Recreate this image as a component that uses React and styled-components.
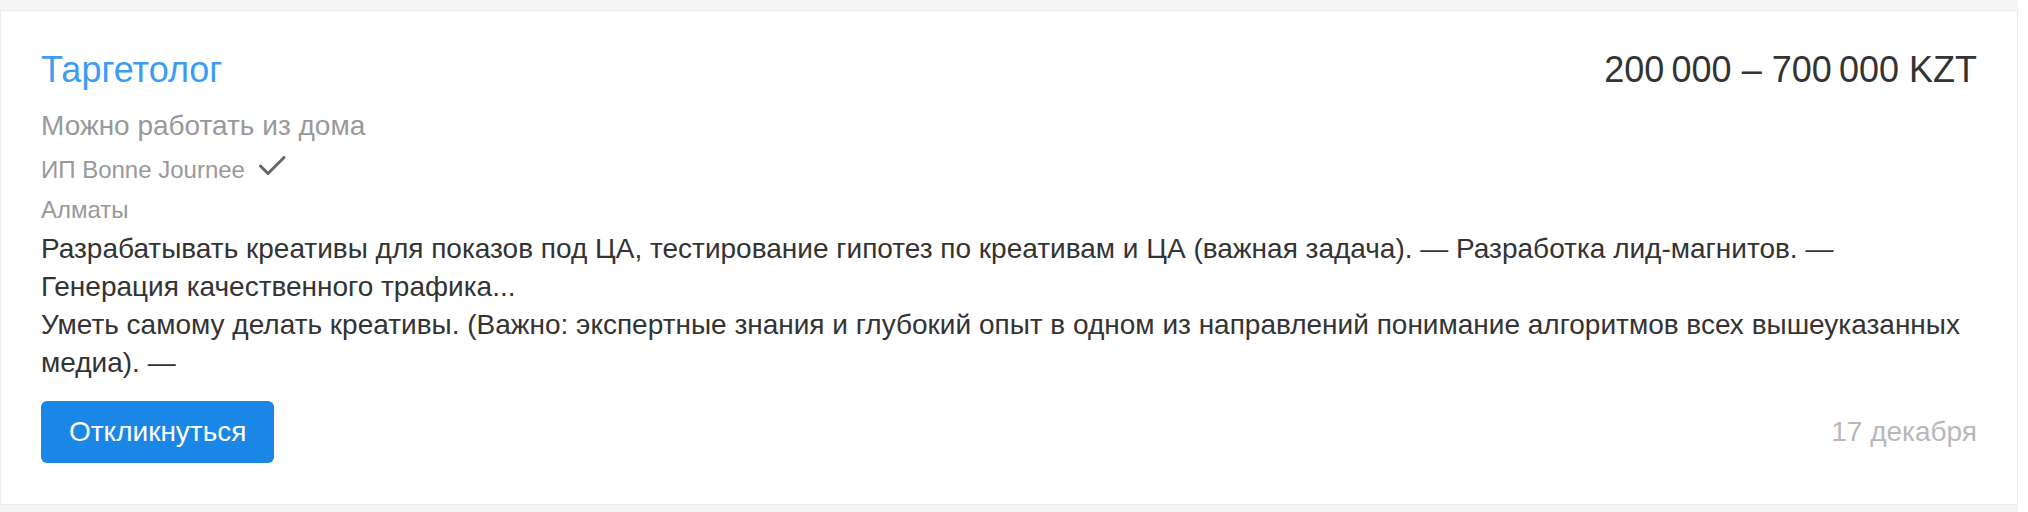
import React from "react";
import styled, { createGlobalStyle } from "styled-components";

const GlobalStyle = createGlobalStyle`
  html, body {
    margin: 0;
    padding: 0;
    background: #ffffff;
  }
  body {
    font-family: "Liberation Sans", Arial, Helvetica, sans-serif;
    -webkit-font-smoothing: antialiased;
  }
`;

const List = styled.div`
  width: 2018px;
  box-sizing: border-box;
  background: #f5f5f5;
  padding: 10px 0 10px;
  display: flex;
  flex-direction: column;
  gap: 10px;
`;

const Card = styled.article`
  background: #ffffff;
  border: 1px solid #ebebeb;
  padding: 36px 40px 41px;
  display: flex;
  flex-direction: column;
`;

const HeaderRow = styled.div`
  display: flex;
  justify-content: space-between;
  align-items: baseline;
`;

const Title = styled.a`
  font-size: 36px;
  line-height: 46px;
  color: #3b9cf4;
  text-decoration: none;
  cursor: pointer;
`;

const Salary = styled.div`
  font-size: 36px;
  line-height: 46px;
  color: #333333;
  white-space: nowrap;
`;

const Subtitle = styled.div`
  margin-top: 13px;
  font-size: 28px;
  line-height: 40px;
  color: #999999;
`;

const MetaList = styled.div`
  margin-top: 4px;
  display: flex;
  flex-direction: column;
`;

const MetaRow = styled.div`
  display: flex;
  align-items: center;
  gap: 13px;
  font-size: 24px;
  line-height: 40px;
  color: #999999;
`;

const CheckIcon = styled.svg`
  width: 28px;
  height: 20px;
  flex: none;
  margin-top: -8px;
`;

const Snippet = styled.div`
  display: flex;
  flex-direction: column;
`;

const SnippetText = styled.p`
  margin: 0;
  font-size: 28px;
  line-height: 38px;
  color: #333333;
`;

const Footer = styled.div`
  margin-top: 19px;
  display: flex;
  justify-content: space-between;
  align-items: center;
`;

const RespondButton = styled.button`
  height: 62px;
  padding: 0 28px;
  border: none;
  border-radius: 6px;
  background: #1a87e6;
  color: #ffffff;
  font-family: "Liberation Sans", Arial, Helvetica, sans-serif;
  font-size: 28px;
  line-height: 62px;
  cursor: pointer;
`;

const DateText = styled.span`
  font-size: 28px;
  line-height: 40px;
  color: #b8b8b8;
`;

function Check() {
  return (
    <CheckIcon viewBox="0 0 28 20" fill="none">
      <path
        d="M2.5 10 L10 17.5 L26 1.5"
        stroke="#666666"
        strokeWidth="3"
        strokeLinecap="round"
        strokeLinejoin="round"
      />
    </CheckIcon>
  );
}

export default function App() {
  return (
    <>
      <GlobalStyle />
      <List>
        <Card>
          <HeaderRow>
            <Title>Таргетолог</Title>
            <Salary>200&#8239;000 – 700&#8239;000 KZT</Salary>
          </HeaderRow>
          <Subtitle>Можно работать из дома</Subtitle>
          <MetaList>
            <MetaRow>
              <span>ИП Bonne Journee</span>
              <Check />
            </MetaRow>
            <MetaRow>Алматы</MetaRow>
          </MetaList>
          <Snippet>
            <SnippetText>
              Разрабатывать креативы для показов под ЦА, тестирование гипотез по
              креативам и ЦА (важная задача). — Разработка лид-магнитов. —
              Генерация качественного трафика...
            </SnippetText>
            <SnippetText>
              Уметь самому делать креативы. (Важно: экспертные знания и глубокий
              опыт в одном из направлений понимание алгоритмов всех
              вышеуказанных медиа). —
            </SnippetText>
          </Snippet>
          <Footer>
            <RespondButton>Откликнуться</RespondButton>
            <DateText>17 декабря</DateText>
          </Footer>
        </Card>
      </List>
    </>
  );
}
